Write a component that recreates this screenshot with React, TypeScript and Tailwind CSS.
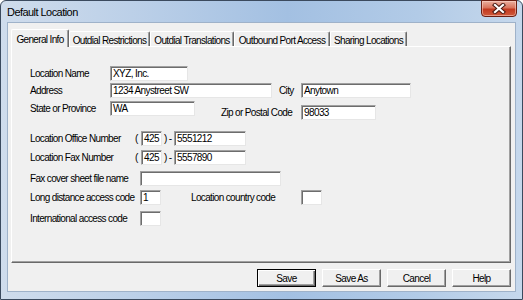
import React from "react";

const F = "font-['Liberation_Sans',Arial,sans-serif]";

function Input({ cls, value }: { cls: string; value?: string }) {
  return (
    <div
      className={`${cls} h-[15px] shrink-0 bg-white border border-t-[#a0a0a0] border-l-[#a0a0a0] border-r-[#e6e6e6] border-b-[#e6e6e6] shadow-[inset_1px_1px_0_#6d6d6d] pl-[2px] text-[10px] tracking-[-0.6px] leading-[13px] text-black overflow-hidden whitespace-nowrap`}
    >
      {value}
    </div>
  );
}

function Label({ cls, children }: { cls: string; children: React.ReactNode }) {
  return <div className={`${cls} shrink-0 text-[10px] tracking-[-0.65px] leading-[13px] text-black whitespace-nowrap`}>{children}</div>;
}

function Tab({ cls, label, active }: { cls: string; label: string; active?: boolean }) {
  if (active) {
    return (
      <div
        className={`${cls} relative z-10 -mb-px h-[18px] bg-[#f0f0f0] border-l border-t border-white border-r border-r-[#696969] rounded-t-[2px] shadow-[inset_-1px_0_0_#a0a0a0] flex items-start justify-center pt-[3px] text-[10px] tracking-[-0.65px] leading-[13px] whitespace-nowrap`}
      >
        {label}
      </div>
    );
  }
  return (
    <div
      className={`${cls} h-[15px] border-l border-t border-white border-r border-r-[#696969] rounded-t-[2px] shadow-[inset_-1px_0_0_#a0a0a0] flex items-start justify-center pt-[2px] text-[10px] tracking-[-0.65px] leading-[13px] whitespace-nowrap`}
    >
      {label}
    </div>
  );
}

function Button({ label, def }: { label: string; def?: boolean }) {
  return (
    <div
      className={`w-[59px] h-[18px] bg-[#f0f0f0] flex items-center justify-center text-[10px] tracking-[-0.6px] leading-[13px] ${
        def
          ? "border border-[#000] shadow-[inset_1px_1px_0_#fff,inset_-1px_-1px_0_#696969,inset_-2px_-2px_0_#a0a0a0]"
          : "border border-t-white border-l-white border-r-[#696969] border-b-[#696969] shadow-[inset_-1px_-1px_0_#a0a0a0]"
      }`}
    >
      {label}
    </div>
  );
}

export default function App() {
  return (
    <div className={`${F} w-[523px] h-[300px] flex flex-col border border-[#3b4a5e] rounded-t-[6px] bg-[linear-gradient(90deg,#cfdcec_0%,#bcd0e8_25%,#a3c0e2_55%,#b2cbe7_80%,#c6d8ec_100%)] text-black`}>
      <div className="h-[21px] flex items-start shrink-0">
        <div className="flex-1 pl-[6px] pt-[4px] text-[11px] tracking-[-0.55px] leading-[14px] text-black">Default Location</div>
        <div className="mr-[5px] w-[36px] h-[17px] -mt-px rounded-b-[4px] border border-[#6b1e12] bg-[linear-gradient(180deg,#eab0a0_0%,#d9735c_45%,#c2391f_55%,#d05a3c_100%)] shadow-[inset_0_0_0_1px_rgba(255,220,210,0.5)] flex items-center justify-center">
          <svg width="14" height="11" viewBox="0 0 14 11">
            <path d="M3 2 L11 9 M11 2 L3 9" stroke="#4a1a12" strokeWidth="4.2" strokeLinecap="square" />
            <path d="M3 2 L11 9 M11 2 L3 9" stroke="#ffffff" strokeWidth="2.2" strokeLinecap="square" />
          </svg>
        </div>
      </div>
      <div className="mx-[6px] h-[270px] shrink-0 bg-[#f0f0f0] border border-[#9fb2c9] flex flex-col">
        <div className="ml-[3px] mt-[6px] h-[17px] flex items-end">
          <Tab cls="w-[58px]" label="General Info" active />
          <Tab cls="w-[81px]" label="Outdial Restrictions" />
          <Tab cls="w-[84px]" label="Outdial Translations" />
          <Tab cls="w-[96px]" label="Outbound Port Access" />
          <Tab cls="w-[77px]" label="Sharing Locations" />
        </div>
        <div className="ml-[3px] w-[500px] h-[217px] border-t border-l border-white border-r border-b border-r-[#696969] border-b-[#696969] shadow-[inset_-1px_-1px_0_#a0a0a0] flex flex-col pl-[18px] pt-[19px]">
          <div className="flex items-center">
            <Label cls="w-[80px]">Location Name</Label>
            <Input cls="w-[78px]" value="XYZ, Inc." />
          </div>
          <div className="flex items-center mt-[2px]">
            <Label cls="w-[80px]">Address</Label>
            <Input cls="w-[162px]" value="1234 Anystreet SW" />
            <Label cls="w-[22px] ml-[7px]">City</Label>
            <Input cls="w-[110px]" value="Anytown" />
          </div>
          <div className="flex items-start mt-[3px]">
            <div className="flex items-center">
              <Label cls="w-[80px]">State or Province</Label>
              <Input cls="w-[85px]" value="WA" />
            </div>
            <div className="flex items-center mt-[4px] ml-[26px]">
              <Label cls="w-[80px]">Zip or Postal Code</Label>
              <Input cls="w-[75px]" value="98033" />
            </div>
          </div>
          <div className="flex items-center mt-[11px]">
            <Label cls="w-[105px]">Location Office Number</Label>
            <Label cls="w-[6px]">(</Label>
            <Input cls="w-[21px]" value="425" />
            <Label cls="w-[12px] pl-[2px]">) -</Label>
            <Input cls="w-[72px]" value="5551212" />
          </div>
          <div className="flex items-center mt-[4px]">
            <Label cls="w-[105px]">Location Fax Number</Label>
            <Label cls="w-[6px]">(</Label>
            <Input cls="w-[21px]" value="425" />
            <Label cls="w-[12px] pl-[2px]">) -</Label>
            <Input cls="w-[72px]" value="5557890" />
          </div>
          <div className="flex items-center mt-[6px]">
            <Label cls="w-[110px]">Fax cover sheet file name</Label>
            <Input cls="w-[141px]" />
          </div>
          <div className="flex items-center mt-[4px]">
            <Label cls="w-[110px]">Long distance access code</Label>
            <Input cls="w-[21px]" value="1" />
            <Label cls="w-[110px] ml-[30px]">Location country code</Label>
            <Input cls="w-[21px]" />
          </div>
          <div className="flex items-center mt-[6px]">
            <Label cls="w-[110px]">International access code</Label>
            <Input cls="w-[21px]" />
          </div>
        </div>
        <div className="mt-[6px] mr-[4px] flex justify-end gap-[6px]">
          <Button label="Save" def />
          <Button label="Save As" />
          <Button label="Cancel" />
          <Button label="Help" />
        </div>
      </div>
    </div>
  );
}
